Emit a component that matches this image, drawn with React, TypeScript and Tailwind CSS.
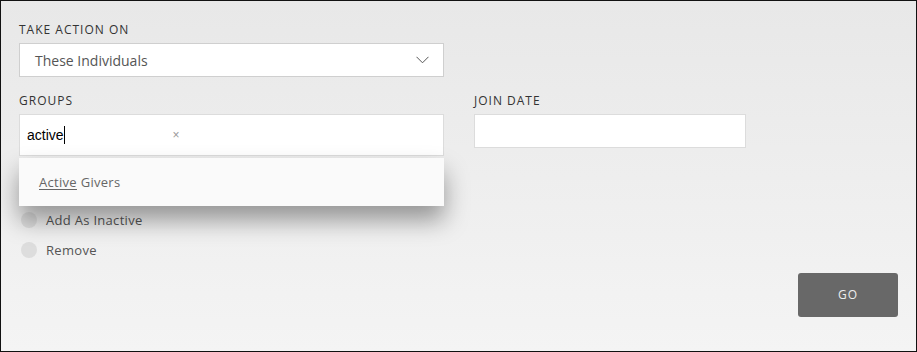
import React from "react"

// ─── Small pieces ─────────────────────────────────────────────────────────────

function FieldLabel({ children }: { children: React.ReactNode }) {
  return (
    <div className="text-xs leading-[20px] tracking-[1px] uppercase text-[#333] mb-[3px]">
      {children}
    </div>
  )
}

function Radio({ label }: { label: string }) {
  return (
    <div className="h-[30px] flex items-center">
      <span className="ml-[2px] w-4 h-4 rounded-full bg-[#dddddd]" />
      <span className="ml-[9px] pt-[2px] text-[13px] tracking-[0.3px] text-[#555]">{label}</span>
    </div>
  )
}

// ─── Page ─────────────────────────────────────────────────────────────────────

export default function App() {
  return (
    <div className="w-[917px] h-[352px] border border-[#111] bg-gradient-to-b from-[#e8e8e8] to-[#f4f4f4] font-['Open_Sans',sans-serif] pt-[19px] px-[18px] pb-[34px] flex flex-col">
      {/* Take action on */}
      <FieldLabel>Take Action On</FieldLabel>
      <div className="w-[425px] h-[34px] border border-[#cfcfcf] bg-white flex items-center justify-between pl-[15px] pr-[14px]">
        <span className="pt-[2px] text-sm text-[#555]">These Individuals</span>
        <svg width="13" height="8" viewBox="0 0 13 8" className="text-[#555]">
          <polyline points="0.5,0.8 6.5,6.8 12.5,0.8" fill="none" stroke="currentColor" strokeWidth="1" />
        </svg>
      </div>

      <div className="flex mt-[14px]">
        {/* Groups */}
        <div className="w-[425px] relative">
          <FieldLabel>Groups</FieldLabel>
          <div className="relative">
            <div className="h-[42px] border border-[#dcdcdc] bg-white flex items-center pl-[7px]">
              <span className="font-['Liberation_Sans',Arial,sans-serif] text-sm text-black">active</span>
              <span className="w-px h-[18px] bg-black" />
              <span className="ml-[108px] text-xs text-[#999] font-['Liberation_Sans',Arial,sans-serif]">×</span>
            </div>

            {/* Suggestions dropdown */}
            <div className="absolute left-0 right-0 top-full mt-[2px] z-10 h-[48px] bg-[#fafafa] flex items-center pl-[20px] pt-[2px] shadow-[0_14px_24px_rgba(0,0,0,0.38)]">
              <span className="text-[13px] tracking-[0.3px] text-[#666]">
                <span className="underline underline-offset-2">Active</span> Givers
              </span>
            </div>
          </div>

          <div className="mt-[49px]">
            <Radio label="Add As Inactive" />
            <Radio label="Remove" />
          </div>
        </div>

        {/* Join date */}
        <div className="ml-[30px] w-[272px]">
          <FieldLabel>Join Date</FieldLabel>
          <div className="h-[34px] border border-[#dcdcdc] bg-white" />
        </div>
      </div>

      <div className="mt-auto flex justify-end">
        <button className="w-[100px] h-[44px] rounded-[3px] bg-[#686868] text-xs tracking-[1px] text-[#eeeeee]">
          GO
        </button>
      </div>
    </div>
  )
}
